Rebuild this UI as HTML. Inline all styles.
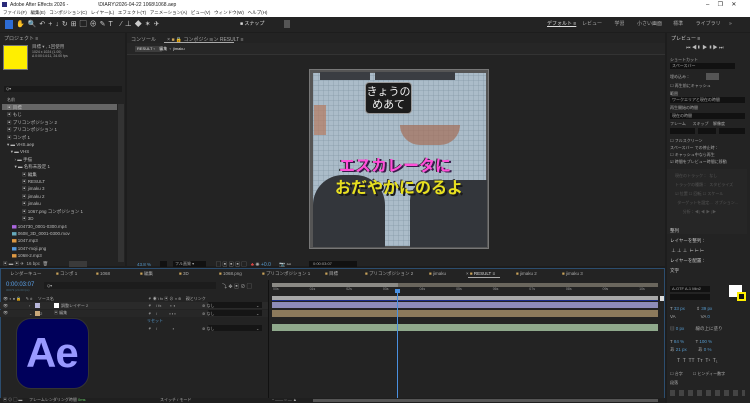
<!DOCTYPE html>
<html><head><meta charset="utf-8"><style>
*{margin:0;padding:0;box-sizing:border-box}
body{width:750px;height:403px;overflow:hidden;background:#1d1d1d;font-family:"Liberation Sans","Noto Sans CJK JP",sans-serif;font-size:5px;color:#bbb;position:relative}
.a{position:absolute}
.t{position:absolute;white-space:nowrap;font-size:5px;color:#aaa}
</style></head><body>
<div class="a" style="left:0;top:0;width:750px;height:17px;background:#fff"></div>
<div class="a" style="left:2px;top:2px;width:5px;height:5px;background:#2a2a7a"></div>
<div class="t" style="left:10px;top:2px;color:#222">Adobe After Effects 2026 -</div>
<div class="t" style="left:98px;top:2px;color:#222">\DIARY\2026-04-22 1068\1068.aep</div>
<div class="t" style="left:706px;top:1px;color:#222;font-size:6px">‒&nbsp;&nbsp;&nbsp;&nbsp;&nbsp;❐&nbsp;&nbsp;&nbsp;&nbsp;&nbsp;✕</div>
<div class="t" style="left:3px;top:10px;color:#222;font-size:4.5px">ファイル(F)&nbsp;&nbsp;&nbsp;編集(E)&nbsp;&nbsp;&nbsp;コンポジション(C)&nbsp;&nbsp;&nbsp;レイヤー(L)&nbsp;&nbsp;&nbsp;エフェクト(T)&nbsp;&nbsp;&nbsp;アニメーション(A)&nbsp;&nbsp;&nbsp;ビュー(V)&nbsp;&nbsp;&nbsp;ウィンドウ(W)&nbsp;&nbsp;&nbsp;ヘルプ(H)</div>
<div class="a" style="left:0;top:17px;width:750px;height:15px;background:#232323"></div>
<div class="a" style="left:5px;top:20px;width:8px;height:9px;background:#2d6cd4"></div>
<div class="t" style="left:16px;top:19px;font-size:7px;color:#ccc;letter-spacing:3px">✋🔍↶+↓↻⊞▢⊕✎T ⁄⊥◆✶✈</div>
<div class="t" style="left:240px;top:20px;color:#ddd">■ スナップ</div>
<div class="a" style="left:284px;top:20px;width:6px;height:8px;background:#555"></div>
<div class="t" style="left:547px;top:20px;color:#ddd;text-decoration:underline">デフォルト&nbsp;≡</div>
<div class="t" style="left:582px;top:20px">レビュー&nbsp;&nbsp;&nbsp;&nbsp;&nbsp;&nbsp;&nbsp;&nbsp;&nbsp;学習&nbsp;&nbsp;&nbsp;&nbsp;&nbsp;&nbsp;&nbsp;&nbsp;&nbsp;小さい画面&nbsp;&nbsp;&nbsp;&nbsp;&nbsp;&nbsp;&nbsp;&nbsp;標準&nbsp;&nbsp;&nbsp;&nbsp;&nbsp;&nbsp;&nbsp;&nbsp;&nbsp;ライブラリ&nbsp;&nbsp;&nbsp;&nbsp;&nbsp;&nbsp;»</div>
<div class="a" style="left:0;top:33px;width:125px;height:233px;background:#232323"></div>
<div class="t" style="left:4px;top:35px">プロジェクト&nbsp;≡</div>
<div class="a" style="left:3px;top:45px;width:25px;height:25px;background:#ffef00;border:1px solid #777"></div>
<div class="t" style="left:32px;top:44px;font-size:4.5px">目標 ▾ , 1回使用</div>
<div class="t" style="left:32px;top:50px;font-size:3.5px">1024 x 1024 (1.00)<br>Δ 0:00:14:11, 24.00 fps</div>
<div class="a" style="left:4px;top:86px;width:118px;height:6px;background:#1a1a1a"></div>
<div class="t" style="left:6px;top:86px;font-size:4px">Q▾</div>
<div class="t" style="left:7px;top:97px;font-size:4px">名前</div>
<div class="a" style="left:2px;top:104px;width:115px;height:6px;background:#666"></div>
<div class="a" style="left:118px;top:104px;width:6px;height:158px;background:#333"></div>
<div class="t" style="left:7px;top:104px;font-size:4.5px;line-height:7.4px;color:#bbb">▣ 目標<br>▣ もじ<br>▣ プリコンポジション 2<br>▣ プリコンポジション 1<br>▣ コンポ 1<br>▾ ▬ VHS.aep<br>&nbsp;&nbsp;&nbsp;▾ ▬ VHS<br>&nbsp;&nbsp;&nbsp;&nbsp;&nbsp;&nbsp;› ▬ 手描<br>&nbsp;&nbsp;&nbsp;&nbsp;&nbsp;&nbsp;▾ ▬ 名称未設定 1<br>&nbsp;&nbsp;&nbsp;&nbsp;&nbsp;&nbsp;&nbsp;&nbsp;&nbsp;&nbsp;&nbsp;&nbsp;▣ 編集<br>&nbsp;&nbsp;&nbsp;&nbsp;&nbsp;&nbsp;&nbsp;&nbsp;&nbsp;&nbsp;&nbsp;&nbsp;▣ RESULT<br>&nbsp;&nbsp;&nbsp;&nbsp;&nbsp;&nbsp;&nbsp;&nbsp;&nbsp;&nbsp;&nbsp;&nbsp;▣ jimaku 3<br>&nbsp;&nbsp;&nbsp;&nbsp;&nbsp;&nbsp;&nbsp;&nbsp;&nbsp;&nbsp;&nbsp;&nbsp;▣ jimaku 2<br>&nbsp;&nbsp;&nbsp;&nbsp;&nbsp;&nbsp;&nbsp;&nbsp;&nbsp;&nbsp;&nbsp;&nbsp;▣ jimaku<br>&nbsp;&nbsp;&nbsp;&nbsp;&nbsp;&nbsp;&nbsp;&nbsp;&nbsp;&nbsp;&nbsp;&nbsp;▣ 1067.png コンポジション 1<br>&nbsp;&nbsp;&nbsp;&nbsp;&nbsp;&nbsp;&nbsp;&nbsp;&nbsp;&nbsp;&nbsp;&nbsp;▣ 3D<br>&nbsp;&nbsp;&nbsp;&nbsp;<span style="color:#a6d">▆</span> 104730_0001-0300.mp4<br>&nbsp;&nbsp;&nbsp;&nbsp;<span style="color:#6ab">▆</span> 0608_3D_0001-0300.mov<br>&nbsp;&nbsp;&nbsp;&nbsp;<span style="color:#d94">▆</span> 1047.mp3<br>&nbsp;&nbsp;&nbsp;&nbsp;<span style="color:#59d">▆</span> 1047-moji.png<br>&nbsp;&nbsp;&nbsp;&nbsp;<span style="color:#d94">▆</span> 1068-2.mp3</div>
<div class="t" style="left:3px;top:261px;font-size:4.5px">▣ ▬ ▣ ✈ &nbsp;16 bpc &nbsp;🗑</div>
<div class="a" style="left:69px;top:261px;width:18px;height:6px;background:#3a3a3a"></div>
<div class="a" style="left:127px;top:33px;width:538px;height:233px;background:#232323"></div>
<div class="t" style="left:131px;top:36px">コンソール&nbsp;&nbsp;&nbsp;&nbsp;&nbsp;&nbsp;&nbsp;&nbsp;× <span style="color:#c9a35a">■</span> 🔒 コンポジション RESULT&nbsp;≡</div>
<div class="a" style="left:164px;top:42px;width:70px;height:1px;background:#aaa"></div>
<div class="a" style="left:127px;top:43px;width:538px;height:12px;background:#262626;border-bottom:1px solid #333"></div>
<div class="a" style="left:135px;top:46px;width:27px;height:6px;background:#3d3d3d"></div>
<div class="t" style="left:137px;top:46px;font-size:4px;color:#ddd">RESULT ‹&nbsp;&nbsp;&nbsp;&nbsp;編集 &nbsp;‹&nbsp;&nbsp;jimaku</div>
<div class="a" style="left:309px;top:69px;width:180px;height:180px;background:#555;border:1px solid #777;overflow:hidden">
  <div class="a" style="left:3px;top:3px;width:173px;height:173px;background:repeating-linear-gradient(0deg,rgba(130,150,165,.35) 0 1px,transparent 1px 5px),repeating-linear-gradient(90deg,rgba(130,150,165,.35) 0 1px,transparent 1px 5px),#abbcc9"></div>
  <div class="a" style="left:10px;top:2px;width:50px;height:8px;background:#3a3d42"></div>
  <div class="a" style="left:65px;top:2px;width:80px;height:8px;background:#3a3d42"></div>
  <div class="a" style="left:4px;top:35px;width:12px;height:30px;background:#b57a60;opacity:.7"></div>
  <div class="a" style="left:90px;top:55px;width:60px;height:20px;background:#a46d57;opacity:.7;border-radius:0 0 20px 20px"></div>
  <div class="a" style="left:3px;top:105px;width:72px;height:72px;background:#33363b;border-radius:30px 30px 0 0"></div>
  <div class="a" style="left:100px;top:110px;width:77px;height:67px;background:#33363b;border-radius:20px 0 0 0"></div>
  <div class="a" style="left:55px;top:12px;width:47px;height:32px;background:#1c1c1c;border:1px solid #999;border-radius:4px;color:#eee;font-size:11px;line-height:13px;text-align:center;padding-top:3px">きょうの<br>めあて</div>
  <div class="t" style="left:29px;top:82px;font-size:16px;font-weight:bold;color:#ff4fd8;text-shadow:2px 1px #3a1a4a,-1px 0 #222">エスカレータに</div>
  <div class="t" style="left:25px;top:104px;font-size:16px;font-weight:bold;color:#e8e020;text-shadow:2px 2px #1a1a1a,-1px -1px #333">おだやかにのるよ</div>
</div>
<div class="t" style="left:137px;top:262px;font-size:4.5px;color:#59c">43.8 %</div>
<div class="a" style="left:160px;top:261px;width:7px;height:6px;background:#111"></div>
<div class="a" style="left:173px;top:261px;width:33px;height:6px;background:#111"></div>
<div class="t" style="left:175px;top:261px;font-size:4px">フル画質 ▾</div>
<div class="t" style="left:216px;top:261px;font-size:5px">▢ ▣ ▣ ▣ ▢&nbsp;&nbsp;&nbsp;<span style="color:#d44">♣</span> ✺ <span style="color:#59c">+0.0</span>&nbsp;&nbsp;&nbsp;&nbsp;&nbsp;&nbsp;📷 ⚯</div>
<div class="a" style="left:309px;top:261px;width:48px;height:6px;background:#111"></div>
<div class="t" style="left:313px;top:261px;font-size:4px">0:00:03:07</div>
<div class="a" style="left:667px;top:33px;width:83px;height:370px;background:#232323"></div>
<div class="t" style="left:671px;top:35px;color:#ccc">プレビュー&nbsp;≡</div>
<div class="t" style="left:686px;top:44px;font-size:5px;color:#bbb">⏮ ◀▮ ▶ ▮▶ ⏭</div>
<div class="t" style="left:670px;top:57px;font-size:4px">ショートカット</div>
<div class="a" style="left:670px;top:63px;width:65px;height:6px;background:#111"></div>
<div class="t" style="left:672px;top:63px;font-size:4px">スペースバー</div>
<div class="t" style="left:670px;top:74px;font-size:4px">埋め込み：</div>
<div class="a" style="left:706px;top:73px;width:13px;height:7px;background:#555"></div>
<div class="t" style="left:670px;top:82px;font-size:4px;line-height:7.5px">☐ 再生前にキャッシュ<br>範囲</div>
<div class="a" style="left:670px;top:97px;width:75px;height:6px;background:#111"></div>
<div class="t" style="left:672px;top:97px;font-size:4px">ワークエリアと現在の時間</div>
<div class="t" style="left:670px;top:105px;font-size:4px">再生開始の時間</div>
<div class="a" style="left:670px;top:113px;width:75px;height:6px;background:#111"></div>
<div class="t" style="left:672px;top:113px;font-size:4px">現在の時間</div>
<div class="t" style="left:670px;top:121px;font-size:4px">フレーム&nbsp;&nbsp;&nbsp;&nbsp;&nbsp;&nbsp;スキップ&nbsp;&nbsp;&nbsp;&nbsp;解像度</div>
<div class="a" style="left:670px;top:128px;width:25px;height:6px;background:#111"></div>
<div class="a" style="left:698px;top:128px;width:18px;height:6px;background:#111"></div>
<div class="a" style="left:719px;top:128px;width:26px;height:6px;background:#111"></div>
<div class="t" style="left:670px;top:137px;font-size:4px;line-height:7px">☐ フルスクリーン<br>スペースバー での停止時：<br>☐ キャッシュ中なら再生<br>☑ 時間をプレビュー時間に移動</div>
<div class="a" style="left:667px;top:169px;width:80px;height:65px;background:#262626"></div>
<div class="t" style="left:675px;top:171px;font-size:4px;color:#555;line-height:9px">現在のトラック：&nbsp;&nbsp;なし<br>トラックの種類：&nbsp;&nbsp;スタビライズ<br>☑ 位置 ☐ 回転 ☐ スケール<br>&nbsp;&nbsp;ターゲットを設定...&nbsp;&nbsp;オプション...<br>&nbsp;&nbsp;&nbsp;&nbsp;&nbsp;&nbsp;&nbsp;分析：◀| ◀ ▶ |▶</div>
<div class="t" style="left:670px;top:226px;font-size:4.5px;color:#ccc;line-height:10px">整列<br>レイヤーを整列：<br>&nbsp;⊥ ⊥ ⊥ &nbsp;⊢ ⊢ ⊢<br>レイヤーを配置：<br>文字</div>
<div class="a" style="left:670px;top:286px;width:40px;height:6px;background:#111"></div>
<div class="t" style="left:672px;top:286px;font-size:4px">A-OTF A-1 Min2</div>
<div class="a" style="left:670px;top:294px;width:40px;height:6px;background:#111"></div>
<div class="a" style="left:729px;top:285px;width:13px;height:12px;background:#fff"></div>
<div class="a" style="left:737px;top:292px;width:9px;height:9px;border:2px solid #ffef00;background:#111"></div>
<div class="t" style="left:670px;top:305px;font-size:4.5px;line-height:8px">T <span style="color:#59c">33 px</span>&nbsp;&nbsp;&nbsp;&nbsp;&nbsp;&nbsp;&nbsp;&nbsp;&nbsp;⇕ <span style="color:#59c">39 px</span><br>VA&nbsp;&nbsp;&nbsp;&nbsp;&nbsp;&nbsp;&nbsp;&nbsp;&nbsp;&nbsp;&nbsp;&nbsp;&nbsp;&nbsp;&nbsp;&nbsp;&nbsp;&nbsp;&nbsp;&nbsp;VA <span style="color:#59c">0</span></div>
<div class="t" style="left:670px;top:325px;font-size:4.5px;line-height:8px">▤ <span style="color:#59c">0 px</span>&nbsp;&nbsp;&nbsp;&nbsp;&nbsp;&nbsp;&nbsp;&nbsp;&nbsp;線の上に塗り</div>
<div class="t" style="left:670px;top:338px;font-size:4.5px;line-height:8px">T <span style="color:#59c">84 %</span>&nbsp;&nbsp;&nbsp;&nbsp;&nbsp;&nbsp;&nbsp;&nbsp;&nbsp;T <span style="color:#59c">100 %</span><br>あ <span style="color:#59c">21 px</span>&nbsp;&nbsp;&nbsp;&nbsp;&nbsp;&nbsp;&nbsp;&nbsp;&nbsp;あ <span style="color:#59c">0 %</span></div>
<div class="t" style="left:677px;top:358px;font-size:5px">T&nbsp; T&nbsp; TT&nbsp; Tт&nbsp; T¹&nbsp; T₁</div>
<div class="t" style="left:670px;top:369px;font-size:4px;line-height:9px">☐ 合字&nbsp;&nbsp;&nbsp;&nbsp;&nbsp;&nbsp;&nbsp;&nbsp;&nbsp;☐ ヒンディー数字<br>段落</div>
<div class="a" style="left:670px;top:390px;width:75px;height:6px;background:repeating-linear-gradient(90deg,#444 0 5px,transparent 5px 9px)"></div>
<!-- timeline -->
<div class="a" style="left:0;top:268px;width:665px;height:135px;background:#232323;border:1px solid #2c4d6e"></div>
<div class="t" style="left:10px;top:271px;font-size:4.5px">レンダーキュー</div>
<div class="t" style="left:56px;top:271px;font-size:4.5px"><span style="color:#c9a35a">■</span> コンポ 1</div>
<div class="t" style="left:96px;top:271px;font-size:4.5px"><span style="color:#c9a35a">■</span> 1068</div>
<div class="t" style="left:140px;top:271px;font-size:4.5px"><span style="color:#c9a35a">■</span> 編集</div>
<div class="t" style="left:179px;top:271px;font-size:4.5px"><span style="color:#c9a35a">■</span> 3D</div>
<div class="t" style="left:219px;top:271px;font-size:4.5px"><span style="color:#c9a35a">■</span> 1068.png</div>
<div class="t" style="left:262px;top:271px;font-size:4.5px"><span style="color:#c9a35a">■</span> プリコンポジション 1</div>
<div class="t" style="left:325px;top:271px;font-size:4.5px"><span style="color:#c9a35a">■</span> 目標</div>
<div class="t" style="left:365px;top:271px;font-size:4.5px"><span style="color:#c9a35a">■</span> プリコンポジション 2</div>
<div class="t" style="left:429px;top:271px;font-size:4.5px"><span style="color:#c9a35a">■</span> jimaku</div>
<div class="t" style="left:466px;top:271px;font-size:4.5px">× <span style="color:#c9a35a">■</span> <span style="color:#ddd">RESULT ≡</span></div>
<div class="t" style="left:516px;top:271px;font-size:4.5px"><span style="color:#c9a35a">■</span> jimaku 2</div>
<div class="t" style="left:562px;top:271px;font-size:4.5px"><span style="color:#c9a35a">■</span> jimaku 3</div>
<div class="a" style="left:468px;top:277px;width:32px;height:1px;background:#aaa"></div>
<div class="t" style="left:6px;top:282px;font-size:6px;color:#5aa0e8">0:00:03:07</div>
<div class="t" style="left:6px;top:288px;font-size:3px;color:#467">00079 (24.00 fps)</div>
<div class="a" style="left:44px;top:282px;width:172px;height:7px;background:#1c1c1c"></div>
<div class="t" style="left:47px;top:283px;font-size:4px">Q▾</div>
<div class="t" style="left:222px;top:283px;font-size:5px">⤵ ✥ ▣ ⊘ ▢</div>
<div class="t" style="left:3px;top:296px;font-size:4px">👁 ◐ ● 🔒&nbsp;&nbsp;&nbsp;&nbsp;✎ #&nbsp;&nbsp;&nbsp;&nbsp;&nbsp;ソース名</div>
<div class="t" style="left:148px;top:296px;font-size:4px">⚘ ◉ \ fx ▣ ⊘ ◑ ⊛&nbsp;&nbsp;&nbsp;&nbsp;親とリンク</div>
<div class="a" style="left:0;top:302px;width:268px;height:7px;background:#2a2a2a"></div>
<div class="a" style="left:0;top:310px;width:268px;height:7px;background:#272727"></div>
<div class="a" style="left:35px;top:303px;width:5px;height:5px;background:#b9b8dd"></div>
<div class="a" style="left:35px;top:311px;width:5px;height:5px;background:#c9a87a"></div>
<div class="a" style="left:54px;top:303px;width:5px;height:5px;background:#fff"></div>
<div class="t" style="left:3px;top:302px;font-size:4px;line-height:8px">👁</div>
<div class="t" style="left:3px;top:310px;font-size:4px">👁</div>
<div class="t" style="left:29px;top:302px;font-size:4px;line-height:8px">›&nbsp;&nbsp;&nbsp;&nbsp;&nbsp;&nbsp;&nbsp;1<br>⌄&nbsp;&nbsp;&nbsp;&nbsp;&nbsp;&nbsp;&nbsp;2</div>
<div class="t" style="left:61px;top:302px;font-size:4px;line-height:8px">調整レイヤー 2<br></div>
<div class="t" style="left:54px;top:310px;font-size:4px">▣ 編集</div>
<div class="t" style="left:148px;top:302px;font-size:4px;line-height:8px">⚘&nbsp;&nbsp;&nbsp;&nbsp;/ fx&nbsp;&nbsp;&nbsp;&nbsp;&nbsp;&nbsp;&nbsp;&nbsp;▪ ◑<br>⚘&nbsp;&nbsp;&nbsp;&nbsp;/&nbsp;&nbsp;&nbsp;&nbsp;&nbsp;&nbsp;&nbsp;&nbsp;&nbsp;&nbsp;&nbsp;▪ ▪ ▪</div>
<div class="t" style="left:147px;top:318px;font-size:4px;color:#59c">リセット</div>
<div class="t" style="left:148px;top:326px;font-size:4px">⚘&nbsp;&nbsp;&nbsp;&nbsp;/&nbsp;&nbsp;&nbsp;&nbsp;&nbsp;&nbsp;&nbsp;&nbsp;&nbsp;&nbsp;&nbsp;&nbsp;&nbsp;&nbsp;▪</div>
<div class="a" style="left:208px;top:302px;width:54px;height:6px;background:#151515"></div>
<div class="a" style="left:208px;top:310px;width:54px;height:6px;background:#151515"></div>
<div class="a" style="left:208px;top:325px;width:54px;height:6px;background:#151515"></div>
<div class="t" style="left:202px;top:302px;font-size:4px;line-height:8px">⊚ なし<br>⊚ なし</div>
<div class="t" style="left:202px;top:326px;font-size:4px">⊚ なし</div>
<div class="t" style="left:256px;top:302px;font-size:4px;line-height:8px">⌄<br>⌄</div>
<div class="t" style="left:256px;top:326px;font-size:4px">⌄</div>
<div class="a" style="left:268px;top:280px;width:1px;height:118px;background:#111"></div>
<div class="a" style="left:272px;top:283px;width:386px;height:4px;background:#6a665d"></div>
<div class="a" style="left:272px;top:283px;width:126px;height:4px;background:#8b8a85"></div>
<div class="t" style="left:273px;top:287px;font-size:3.5px;color:#999;word-spacing:30px">00s 01s 02s 03s 04s 05s 06s 07s 08s 09s 10s</div>
<div class="a" style="left:272px;top:296px;width:386px;height:5px;background:#a8a8a8"></div>
<div class="a" style="left:272px;top:300px;width:386px;height:1px;background:#1b2d8a"></div>
<div class="a" style="left:272px;top:302px;width:386px;height:6px;background:#8d8cb9"></div>
<div class="a" style="left:272px;top:310px;width:386px;height:7px;background:#8c7a5c"></div>
<div class="a" style="left:272px;top:324px;width:386px;height:7px;background:#8fa98c"></div>
<div class="a" style="left:397px;top:289px;width:1px;height:114px;background:#4a90e0"></div>
<div class="a" style="left:395px;top:289px;width:5px;height:4px;background:#4a90e0"></div>
<div class="a" style="left:660px;top:296px;width:4px;height:5px;background:#ddd"></div>
<div class="a" style="left:0;top:398px;width:665px;height:5px;background:#1f1f1f"></div>
<div class="t" style="left:3px;top:397px;font-size:4px">▣ ⊙ ▢ ▬&nbsp;&nbsp;&nbsp;&nbsp;&nbsp;&nbsp;フレームレンダリング時間 <span style="color:#6c6">0ms</span></div>
<div class="t" style="left:160px;top:397px;font-size:4px">スイッチ / モード</div>
<div class="t" style="left:272px;top:397px;font-size:4px">⁃ —— ○ — ▲</div>
<div class="a" style="left:313px;top:399px;width:345px;height:3px;background:#555"></div>
<div class="a" style="left:16px;top:318px;width:73px;height:71px;background:#00005b;border-radius:15px;border:1px solid #333"></div>
<div class="t" style="left:26px;top:329px;font-size:42px;font-weight:bold;color:#9999ff;letter-spacing:-1px">Ae</div>
</body></html>
